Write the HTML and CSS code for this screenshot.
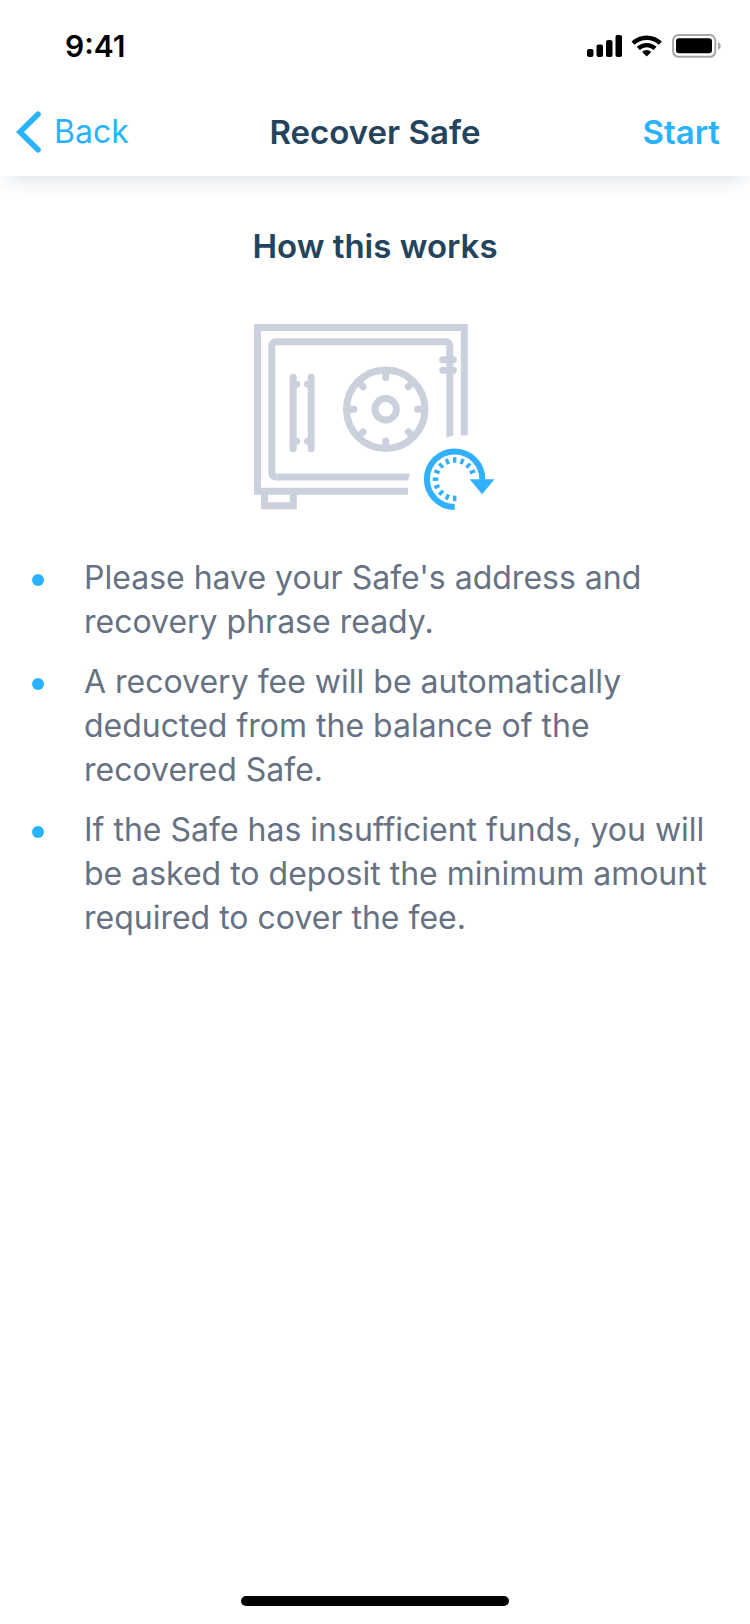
FILE: index.html
```html
<!DOCTYPE html>
<html lang="en">
<head>
<meta charset="utf-8">
<meta name="viewport" content="width=device-width, initial-scale=1">
<title>Recover Safe</title>
<link rel="stylesheet" href="styles.css">
</head>
<body>
<div class="screen">
  <div class="status-bar">
    <span class="clock">9:41</span>
    <svg class="status-icons" viewBox="586 33 136 26" width="136" height="26" aria-hidden="true">
      <rect x="587" y="49" width="6.5" height="8" rx="2"/>
      <rect x="596.5" y="44.5" width="6.5" height="12.5" rx="2"/>
      <rect x="606" y="40" width="6.5" height="17" rx="2"/>
      <rect x="615.5" y="35" width="6.5" height="22" rx="2"/>
      <g fill="none" stroke="#000" stroke-width="4.4">
        <path d="M633 43.2a20 20 0 0 1 27.400 0"/>
        <path d="M638.300 48.400a12.400 12.400 0 0 1 16.800 0"/>
      </g>
      <path d="M646.700 56.600l-4.600-4.700a6.800 6.800 0 0 1 9.200 0z"/>
      <rect x="673.100" y="35" width="42.200" height="21.800" rx="5.500" fill="none" stroke="#a6a6a6" stroke-width="2"/>
      <rect x="676" y="38.300" width="36" height="15" rx="3"/>
      <path d="M718 42v8c3.600-1.600 3.600-6.400 0-8z" fill="#a6a6a6"/>
    </svg>
  </div>
  <header class="nav-bar">
    <button class="nav-button back" type="button">
      <svg viewBox="0 0 26 42" width="26" height="42" aria-hidden="true"><path d="M22 3.200L4 21l18 17.800" fill="none" stroke="currentColor" stroke-width="5.600" stroke-linecap="round"/></svg>
      Back
    </button>
    <h1 class="nav-title">Recover Safe</h1>
    <button class="nav-button start" type="button">Start</button>
  </header>
  <main class="content">
    <h2 class="heading">How this works</h2>
    <svg class="safe" viewBox="14 14 242 187" width="242" height="187" role="img" aria-label="Safe with a recovery arrow">
      <g fill="none" stroke="#cbd0dd" stroke-width="7">
        <path d="M224.300 125.500V17.500H17.500v163.800H168"/>
        <path d="M24.500 181v14.700h28.800V181"/>
        <path d="M209.800 128V35.800a4 4 0 0 0-4-4h-170a4 4 0 0 0-4 4V163a4 4 0 0 0 4 4H170.500"/>
        <circle cx="145.700" cy="99.300" r="39.200"/>
        <circle cx="145.700" cy="99.300" r="10.700"/>
        <g stroke-linecap="round">
          <path d="M53.200 67.300v71.400M53.200 74.300h3.500M53.200 131.300h3.500M71.200 67.300v71.400M71.200 74.300h-3.700M71.200 131.300h-3.700"/>
          <path d="M202.700 49.700h10.700M202.700 60.300h10.700"/>
          <path d="M145.700 60.500v7M145.700 138.100v-7M106.900 99.300h7M184.500 99.300h-7M118.500 72.100l4.600 4.600M172.900 72.100l-4.600 4.600M118.500 126.500l4.600-4.600M172.900 126.500l-4.600-4.600"/>
        </g>
      </g>
      <path fill="#fff" d="M206 127.500l8-2.200v4h-8zM170.200 162.500l-2.200 8.500h4v-8.500z"/>
      <g fill="none" stroke="#30b0ff">
        <path stroke-width="6" d="M214.700 196.900a27.700 27.700 0 1 1 27.600-27.200"/>
        <g stroke-width="3.400">
          <path id="tick" d="M214.700 147.200v5.600"/>
          <use href="#tick" transform="rotate(22.5 214.700 169.200)"/>
          <use href="#tick" transform="rotate(45 214.700 169.200)"/>
          <use href="#tick" transform="rotate(67.5 214.700 169.200)"/>
          <use href="#tick" transform="rotate(180 214.700 169.200)"/>
          <use href="#tick" transform="rotate(202.5 214.700 169.200)"/>
          <use href="#tick" transform="rotate(225 214.700 169.200)"/>
          <use href="#tick" transform="rotate(247.5 214.700 169.200)"/>
          <use href="#tick" transform="rotate(270 214.700 169.200)"/>
          <use href="#tick" transform="rotate(292.5 214.700 169.200)"/>
          <use href="#tick" transform="rotate(315 214.700 169.200)"/>
          <use href="#tick" transform="rotate(337.5 214.700 169.200)"/>
        </g>
      </g>
      <path fill="#30b0ff" d="M229.700 169.200h24.800l-12.400 15z"/>
    </svg>
    <ul class="steps">
      <li class="step">Please have your Safe's address and recovery phrase ready.</li>
      <li class="step">A recovery fee will be automatically deducted from the balance of the recovered Safe.</li>
      <li class="step">If the Safe has insufficient funds, you will be asked to deposit the minimum amount required to cover the fee.</li>
    </ul>
  </main>
  <div class="home-indicator"></div>
</div>
</body>
</html>
```
FILE: styles.css
```css
* {
  box-sizing: border-box;
}

body {
  margin: 0;
  background: #fff;
  color: #667283;
  font-family: Inter, "Liberation Sans", sans-serif;
  font-size: 32px;
  line-height: 44px;
}

.screen {
  display: flex;
  flex-direction: column;
  min-height: 100vh;
}

.status-bar {
  display: flex;
  align-items: center;
  justify-content: space-between;
  height: 88px;
  padding: 4px 28px 0 65px;
}

.clock {
  color: #000;
  font-size: 30px;
  font-weight: 600;
}

.nav-bar {
  display: grid;
  grid-template-columns: 1fr auto 1fr;
  align-items: center;
  height: 88px;
  padding: 0 16px;
  box-shadow: 0 12px 20px -8px #dbe2e7;
}

.nav-button {
  display: flex;
  align-items: center;
  gap: 12px;
  padding: 0;
  border: 0;
  background: none;
  color: #29b3ff;
  font: inherit;
  cursor: pointer;
}

.start {
  justify-self: end;
  padding-right: 14px;
  font-size: 33px;
  font-weight: 600;
}

.nav-title,
.heading {
  margin: 0;
  color: #23445c;
  font-size: 33px;
  font-weight: 600;
}

.content {
  display: flex;
  flex: 1;
  flex-direction: column;
  align-items: center;
  padding: 48px 24px 0;
}

.safe {
  margin: 56px 0 45px;
}

.steps {
  display: flex;
  flex-direction: column;
  gap: 16px;
  align-self: stretch;
  margin: 0;
  padding: 0 0 0 8px;
  list-style: none;
}

.step {
  display: flex;
  gap: 40px;
}

.step::before {
  content: "";
  flex: none;
  width: 12px;
  height: 12px;
  margin-top: 18px;
  border-radius: 50%;
  background: #29b3ff;
}

.home-indicator {
  align-self: center;
  width: 268px;
  height: 10px;
  margin-bottom: 18px;
  border-radius: 5px;
  background: #000;
}
```
